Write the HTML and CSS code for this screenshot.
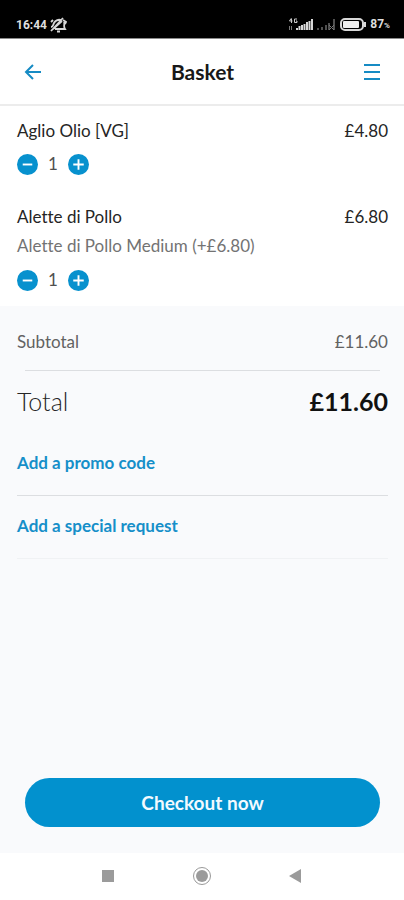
FILE: index.html
```html
<!DOCTYPE html>
<html lang="en">
<head>
<meta charset="utf-8">
<meta name="viewport" content="width=device-width, initial-scale=1">
<title>Basket</title>
<link rel="stylesheet" href="styles.css">
</head>
<body>
<div class="status">
  <span class="status-time">16:44</span>
  <svg class="status-mute" width="18" height="16" viewBox="0 0 18 16" fill="none" stroke="#d6d6d6" stroke-width="1.8" aria-hidden="true"><path d="M2 10c2 0 2-2 3-4s4-4 7-3M15 5c1 3-1 4 1 7H6M8 14.500h3M2 14 14 1M4 3 2 5M14 3l3 2-1 2M4 12l9-8"/></svg>
  <span class="status-right">
    <svg width="26" height="16" viewBox="0 0 26 16" aria-hidden="true"><g fill="none" stroke="#c8c8c8"><path d="M3 1.500 1.500 4H4.500M3.500 1.500V6M9 2H6.500V5.500H9V4H8"/></g><path fill="#777" d="M1 9h1v4H1zM3 9h1v4H3z"/><path fill="#d8d8d8" d="M8 11h2v2H8zM10.500 9h2v4h-2zM13 8h2v5h-2zM15.500 7h2v6h-2zM18 5h2v8h-2zM20.500 4h2v9h-2zM23 2h2v11h-2z"/></svg>
    <svg width="19" height="16" viewBox="0 0 19 16" aria-hidden="true"><path fill="#505050" d="M0 11h2v2H0zM4 10h2v3H4zM8 8h2v5H8zM11 6h2v7h-2zM16 2h2v11h-2z"/><path stroke="#777" d="m12 8 5 5m0-5-5 5"/></svg>
    <svg width="28" height="16" viewBox="0 0 28 16" aria-hidden="true"><rect x="2" y="2" width="22" height="11" rx="4" fill="none" stroke="#d8d8d8" stroke-width="2"/><rect x="4" y="4" width="16" height="7" rx="1" fill="#eee"/><path fill="#d8d8d8" d="M25 5h2v5h-2z"/></svg>
    <span class="status-charge">87<small>%</small></span>
  </span>
</div>
<header class="header">
  <button class="icon-button" aria-label="Back"><svg width="18" height="16" viewBox="0 0 18 16" fill="none" stroke="#168bc4" stroke-width="2"><path d="M17 8H2M9 1 2 8l7 7"/></svg></button>
  <h1>Basket</h1>
  <button class="icon-button" aria-label="Menu"><svg width="18" height="18" viewBox="0 0 18 18" fill="#168bc4"><path d="M1 1h16v2H1zM1 8h16v2H1zM1 15h16v2H1z"/></svg></button>
</header>
<main>
  <ul class="items">
    <li>
      <div class="row"><span>Aglio Olio [VG]</span><span>£4.80</span></div>
      <div class="stepper">
        <button aria-label="Remove one Aglio Olio"><svg width="21" height="21" viewBox="0 0 22 22"><circle cx="11" cy="11" r="11" fill="#0791ce"/><path d="M6 11h10" stroke="#fff" stroke-width="2"/></svg></button>
        <span>1</span>
        <button aria-label="Add one Aglio Olio"><svg width="21" height="21" viewBox="0 0 22 22"><circle cx="11" cy="11" r="11" fill="#0791ce"/><path d="M5.500 11h11M11 5.500v11" stroke="#fff" stroke-width="2"/></svg></button>
      </div>
    </li>
    <li>
      <div class="row"><span>Alette di Pollo</span><span>£6.80</span></div>
      <p class="option">Alette di Pollo Medium (+£6.80)</p>
      <div class="stepper">
        <button aria-label="Remove one Alette di Pollo"><svg width="21" height="21" viewBox="0 0 22 22"><circle cx="11" cy="11" r="11" fill="#0791ce"/><path d="M6 11h10" stroke="#fff" stroke-width="2"/></svg></button>
        <span>1</span>
        <button aria-label="Add one Alette di Pollo"><svg width="21" height="21" viewBox="0 0 22 22"><circle cx="11" cy="11" r="11" fill="#0791ce"/><path d="M5.500 11h11M11 5.500v11" stroke="#fff" stroke-width="2"/></svg></button>
      </div>
    </li>
  </ul>
  <section class="summary">
    <div class="row subtotal"><span>Subtotal</span><span>£11.60</span></div>
    <hr>
    <div class="row total"><span>Total</span><strong>£11.60</strong></div>
    <a class="extra" href="#promo">Add a promo code</a>
    <a class="extra extra-last" href="#request">Add a special request</a>
  </section>
  <div class="checkout"><button>Checkout now</button></div>
</main>
<nav class="system">
  <button aria-label="Recent apps"><svg width="20" height="20" viewBox="0 0 20 20"><path fill="#9b9b9b" d="M4 4h12v12H4z"/></svg></button>
  <button aria-label="Home"><svg width="20" height="20" viewBox="0 0 20 20"><circle cx="10" cy="10" r="8.500" fill="none" stroke="#999"/><circle cx="10" cy="10" r="6" fill="#9b9b9b"/></svg></button>
  <button aria-label="Back to previous screen"><svg width="20" height="20" viewBox="0 0 20 20"><path fill="#9b9b9b" d="M16 3v14L4 10z"/></svg></button>
</nav>
</body>
</html>
```
FILE: styles.css
```css
* { box-sizing: border-box; }
body {
  margin: 0;
  min-height: 100vh;
  display: flex;
  flex-direction: column;
  background: #fff;
  color: #252525;
  font: 17px/24px Lato, "Noto Sans", sans-serif;
  font-variant-ligatures: none;
}
button {
  padding: 0;
  border: 0;
  background: none;
  font: inherit;
  color: inherit;
}
svg { display: block; }
.status {
  display: flex;
  align-items: center;
  height: 39px;
  padding: 12px 14px 0 16px;
  border-bottom: 1px solid #8a8a8a;
  background: #000;
  color: #dedede;
  font: bold 12px/16px Roboto, sans-serif;
}
.status-mute { margin-left: 2px; }
.status-right {
  display: flex;
  align-items: center;
  gap: 3px;
  margin-left: auto;
}
.status-charge small { font-size: 8px; }
.header {
  display: flex;
  align-items: center;
  justify-content: space-between;
  height: 67px;
  padding: 0 23px 0 24px;
  border-bottom: 2px solid #ececec;
}
.header h1 {
  margin: 0;
  font-size: 21px;
  font-weight: bold;
  color: #181818;
}
.icon-button { display: flex; }
main {
  flex: 1;
  display: flex;
  flex-direction: column;
  background: #f9fafc;
}
.items {
  display: flex;
  flex-direction: column;
  gap: 30px;
  margin: 0;
  padding: 13px 16px 15px 17px;
  list-style: none;
  background: #fff;
}
.row {
  display: flex;
  justify-content: space-between;
  align-items: center;
}
.option {
  margin: 5px 0 0;
  color: #737373;
}
.stepper {
  display: flex;
  align-items: center;
  height: 22px;
  margin-top: 10px;
  color: #505050;
}
.option + .stepper { margin-top: 11px; }
.stepper span {
  width: 30px;
  text-align: center;
}
.summary {
  padding: 24px 16px 0 17px;
}
.subtotal { color: #626262; }
.summary hr {
  height: 1px;
  margin: 16px 8px;
  border: 0;
  background: #dcdee1;
}
.total { font-size: 25px; line-height: 28px; }
.total span { font-weight: 300; }
.total strong { color: #111; }
.extra {
  display: block;
  margin-top: 18px;
  padding: 18px 0 20px;
  border-bottom: 1px solid #dcdee1;
  color: #168fc9;
  font-weight: bold;
  text-decoration: none;
}
.extra + .extra { margin-top: 0; }
.extra-last { border-color: #f0f2f4; }
.checkout {
  margin-top: auto;
  padding: 24px 24px 26px 25px;
}
.checkout button {
  display: block;
  width: 100%;
  height: 49px;
  border-radius: 25px;
  background: #0291ce;
  color: #f2faff;
  font-size: 19px;
  font-weight: bold;
}
.system {
  display: flex;
  justify-content: space-between;
  height: 47px;
  padding: 13px 99px 0 98px;
}
.system button { height: 20px; }
```
